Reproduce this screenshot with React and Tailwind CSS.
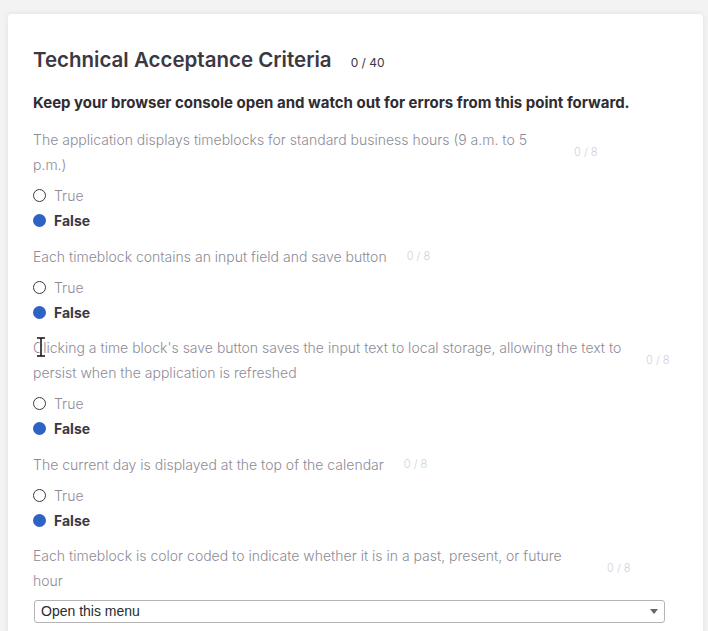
import React from "react";

const questions = [
  {
    text: "The application displays timeblocks for standard business hours (9 a.m. to 5 p.m.)",
    width: "w-[521px]",
    kind: "radio",
  },
  {
    text: "Each timeblock contains an input field and save button",
    width: "w-auto",
    kind: "radio",
  },
  {
    text: "Clicking a time block's save button saves the input text to local storage, allowing the text to persist when the application is refreshed",
    width: "w-[593px]",
    kind: "radio",
    cursor: true,
  },
  {
    text: "The current day is displayed at the top of the calendar",
    width: "w-auto",
    kind: "radio",
  },
  {
    text: "Each timeblock is color coded to indicate whether it is in a past, present, or future hour",
    width: "w-[554px]",
    kind: "select",
  },
];

const Radio = ({ label, checked }) => (
  <div className="flex items-center h-[25px]">
    {checked ? (
      <span className="w-[13px] h-[13px] rounded-full bg-[#2d63c4]" />
    ) : (
      <span className="w-[13px] h-[13px] rounded-full border-[1.5px] border-[#3a3a3a] bg-white" />
    )}
    <span
      className={
        checked
          ? "ml-[8px] text-[14px] font-bold text-[#3b3841]"
          : "ml-[8px] text-[14px] font-light text-[#8e8b97]"
      }
    >
      {label}
    </span>
  </div>
);

const Question = ({ q }) => (
  <div className="mb-[10.5px]">
    <div className="flex items-center relative">
      <p className={`${q.width} text-[14px] font-light leading-[25px] text-[#8e8b97]`}>{q.text}</p>
      <span className="ml-[20px] text-[11px] font-light text-[#d3d1d8] whitespace-nowrap">0 / 8</span>
      {q.cursor && (
        <svg
          className="absolute left-[3px] top-[2px]"
          width="10"
          height="20"
          viewBox="0 0 10 20"
        >
          <path d="M1 1h8M5 1v18M1 19h8" stroke="#fff" strokeWidth="3" fill="none" />
          <path d="M1 1h8M5 1v18M1 19h8" stroke="#111" strokeWidth="1.5" fill="none" />
        </svg>
      )}
    </div>
    {q.kind === "radio" ? (
      <div className="mt-[6px]">
        <Radio label="True" />
        <Radio label="False" checked />
      </div>
    ) : (
      <div className="mt-[7px] ml-[1px] w-[631px] h-[23px] border border-[#b4b4b4] rounded-[3px] bg-white flex items-center justify-between px-[6px]">
        <span className="text-[14px] text-[#2b2b2b] font-['Liberation_Sans',Arial,sans-serif]">
          Open this menu
        </span>
        <svg width="8" height="5" viewBox="0 0 8 5">
          <path d="M0 0h8L4 5z" fill="#666" />
        </svg>
      </div>
    )}
  </div>
);

export default function App() {
  return (
    <div className="bg-[#f3f3f3] pt-[14px] px-[8px] font-['Inter','Noto_Sans',sans-serif] overflow-hidden h-[631px]">
      <div className="bg-white rounded-[4px] shadow-[0_0_6px_rgba(0,0,0,0.08)] pl-[25px] pr-[20px] pt-[32px] pb-[20px] w-[695px]">
        <div className="flex items-baseline">
          <h1 className="text-[20.5px] font-semibold text-[#3b3841] leading-[28px]">
            Technical Acceptance Criteria
          </h1>
          <span className="ml-[19px] text-[12px] text-[#3b3841]">0 / 40</span>
        </div>
        <p className="mt-[17px] text-[15px] font-bold text-[#2f2c33] leading-[24px]">
          Keep your browser console open and watch out for errors from this point forward.
        </p>
        <div className="mt-[12px]">
          {questions.map((q, i) => (
            <Question key={i} q={q} />
          ))}
        </div>
      </div>
    </div>
  );
}
